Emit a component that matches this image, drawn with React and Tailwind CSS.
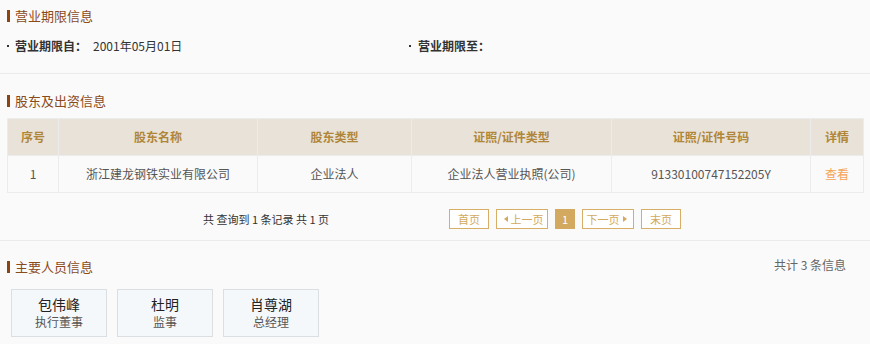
import React from "react";

const font = { fontFamily: '"Noto Sans CJK SC", "Noto Sans", sans-serif' };

function Heading({ children }) {
  return (
    <div className="flex items-center h-[16px]">
      <span className="w-[3px] h-[12px] bg-[#8b4513] mr-[5px]" />
      <span className="text-[13px] leading-[16px] text-[#8a4b1a]">{children}</span>
    </div>
  );
}

function PageBtn({ children, active, w }) {
  return (
    <div
      className={
        "h-[20px] flex items-center justify-center border text-[11px] leading-none " +
        (active
          ? "bg-[#d2a95e] border-[#d2a95e] text-white"
          : "border-[#d6ae66] text-[#d2a95e] bg-white")
      }
      style={{ width: w }}
    >
      {children}
    </div>
  );
}

function Tri({ dir }) {
  return (
    <svg width="4" height="6" viewBox="0 0 4 6" className="mx-[3px]">
      {dir === "l" ? <path d="M4 0 L0 3 L4 6 Z" fill="#d2a95e" /> : <path d="M0 0 L4 3 L0 6 Z" fill="#d2a95e" />}
    </svg>
  );
}

export default function App() {
  const cols = [51, 199, 154, 200, 199, 53];
  const th = "border border-[#ececec] text-[12px] font-bold text-[#b0863a] text-center";
  const td = "border border-[#ececec] text-[12px] text-[#555] text-center";
  return (
    <div className="w-[870px] h-[344px] bg-[#fafafa] overflow-hidden" style={font}>
      {/* section 1 */}
      <div className="h-[74px] border-b border-[#ebebeb] pl-[7px] pt-[8px]">
        <Heading>营业期限信息</Heading>
        <div className="flex mt-[14px] h-[16px] items-center text-[12px] text-[#333]">
          <div className="w-[402px] flex items-center">
            <span className="w-[2px] h-[2px] bg-[#333] mr-[6px]" />
            <span className="font-bold">营业期限自：</span>
            <span className="ml-[6px]">2001年05月01日</span>
          </div>
          <div className="flex items-center">
            <span className="w-[2px] h-[2px] bg-[#333] mr-[7px]" />
            <span className="font-bold">营业期限至：</span>
          </div>
        </div>
      </div>

      {/* section 2 */}
      <div className="h-[167px] border-b border-[#ebebeb] pl-[7px] pr-[7px] pt-[19px]">
        <Heading>股东及出资信息</Heading>
        <table className="mt-[9px] w-[856px] table-fixed border-collapse">
          <colgroup>
            {cols.map((c, i) => (
              <col key={i} style={{ width: c }} />
            ))}
          </colgroup>
          <thead>
            <tr className="h-[37px] bg-[#e9e2d8]">
              <th className={th}>序号</th>
              <th className={th}>股东名称</th>
              <th className={th}>股东类型</th>
              <th className={th}>证照/证件类型</th>
              <th className={th}>证照/证件号码</th>
              <th className={th}>详情</th>
            </tr>
          </thead>
          <tbody>
            <tr className="h-[37px] bg-[#fafafa]">
              <td className={td}>1</td>
              <td className={td}>浙江建龙钢铁实业有限公司</td>
              <td className={td}>企业法人</td>
              <td className={td}>企业法人营业执照(公司)</td>
              <td className={td}>91330100747152205Y</td>
              <td className={td + " !text-[#f5a354]"}>查看</td>
            </tr>
          </tbody>
        </table>
        <div className="flex items-center mt-[16px]">
          <div className="w-[442px] pl-[196px] text-[11px] text-[#333]">共 查询到 1 条记录 共 1 页</div>
          <div className="flex items-center gap-[7px]">
            <PageBtn w={40}>首页</PageBtn>
            <PageBtn w={52}>
              <Tri dir="l" />
              上一页
            </PageBtn>
            <PageBtn w={20} active>
              1
            </PageBtn>
            <PageBtn w={52}>
              下一页
              <Tri dir="r" />
            </PageBtn>
            <PageBtn w={40}>末页</PageBtn>
          </div>
        </div>
      </div>

      {/* section 3 */}
      <div className="pl-[7px] pr-[24px] pt-[18px]">
        <div className="flex items-center justify-between">
          <Heading>主要人员信息</Heading>
          <span className="text-[12px] text-[#666] -mt-[4px]">共计 3 条信息</span>
        </div>
        <div className="flex gap-[10px] mt-[14px] ml-[4px]">
          {[
            ["包伟峰", "执行董事"],
            ["杜明", "监事"],
            ["肖尊湖", "总经理"],
          ].map(([n, r]) => (
            <div
              key={n}
              className="w-[96px] h-[48px] border border-[#dcdfe2] bg-[#f5f8fa] flex flex-col items-center justify-center"
            >
              <div className="text-[14px] leading-[18px] text-[#222]">{n}</div>
              <div className="text-[12px] leading-[18px] text-[#555]">{r}</div>
            </div>
          ))}
        </div>
      </div>
    </div>
  );
}
